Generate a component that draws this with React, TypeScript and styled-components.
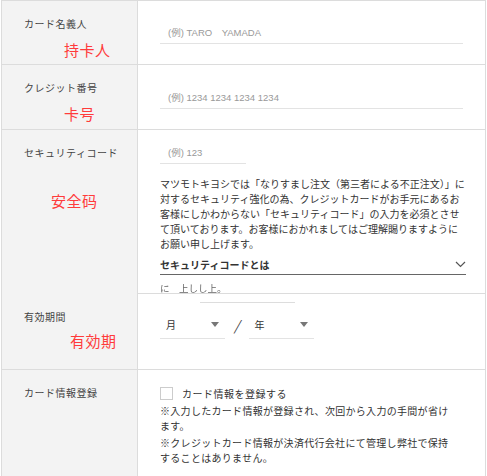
import React from "react";
import styled, { createGlobalStyle } from "styled-components";

const Global = createGlobalStyle`
  html, body { margin: 0; padding: 0; background: #fff; }
  body { font-family: "Noto Sans CJK JP", "Noto Sans", sans-serif; color: #333; }
`;

const Table = styled.div`
  width: 483px;
  border: 1.5px solid #dcdcdc;
  border-bottom: none;
  margin-left: 1px;
`;

const Row = styled.div<{ h: number }>`
  display: grid;
  grid-template-columns: 136px 1fr;
  height: ${(p) => p.h}px;
  border-bottom: 1.5px solid #dcdcdc;
`;

const Label = styled.div`
  background: #f3f3f3;
  border-right: 1.5px solid #dcdcdc;
  padding: 15px 0 0 22px;
  display: flex;
  flex-direction: column;
  font-size: 10px;
  color: #444;
  letter-spacing: 0.5px;
`;

const Red = styled.div<{ top: number; left: number }>`
  color: #ff3b3b;
  font-size: 15px;
  margin-top: ${(p) => p.top}px;
  margin-left: ${(p) => p.left}px;
`;

const Body = styled.div<{ pt: number }>`
  padding: ${(p) => p.pt}px 22px 0 22px;
  display: flex;
  flex-direction: column;
`;

const Input = styled.div<{ w?: number }>`
  width: ${(p) => (p.w ? p.w + "px" : "100%")};
  border-bottom: 1.5px solid #e3e3e3;
  color: #999;
  font-size: 9.5px;
  font-family: "Liberation Sans", "Noto Sans CJK JP", sans-serif;
  padding: 0 0 4px 8px;
  box-sizing: border-box;
`;

const Para = styled.p`
  margin: 12px 0 0;
  font-size: 10px;
  line-height: 15px;
  color: #333;
  letter-spacing: 0;
  width: 306px;
`;

const Toggle = styled.div`
  margin-top: 6px;
  display: flex;
  justify-content: space-between;
  align-items: center;
  border-bottom: 1.5px solid #666;
  font-size: 10px;
  font-weight: bold;
  padding-bottom: 2px;
`;

const Faded = styled.div`
  font-size: 9.5px;
  color: #666;
  margin-top: 6px;
  filter: blur(0.3px);
`;

const ShortLine = styled.div`
  width: 95px;
  margin: 8px 0 0 40px;
  border-bottom: 1.5px solid #ddd;
`;

const Selects = styled.div`
  display: flex;
  align-items: center;
  gap: 9px;
  margin-top: 12px;
`;

const Select = styled.div`
  width: 65px;
  border-bottom: 1.5px solid #e3e3e3;
  display: flex;
  justify-content: space-between;
  align-items: center;
  font-size: 10px;
  padding: 0 6px 6px 6px;
  box-sizing: border-box;
`;

const Arrow = styled.span`
  width: 0; height: 0;
  border-left: 4px solid transparent;
  border-right: 4px solid transparent;
  border-top: 5px solid #777;
`;

const Slash = styled.span`
  font-size: 14px;
  color: #444;
  margin-bottom: 6px;
  font-style: italic;
`;

const Check = styled.label`
  display: flex;
  align-items: center;
  gap: 9px;
  font-size: 10px;
  letter-spacing: 0.5px;
`;

const Box = styled.span`
  width: 11px; height: 11px;
  border: 1px solid #ccc;
  background: #fff;
`;

const Note = styled.p`
  margin: 2px 0 0;
  font-size: 10px;
  line-height: 15px;
  letter-spacing: 0.3px;
  width: 296px;
`;

export default function App() {
  return (
    <>
      <Global />
      <Table>
        <Row h={63}>
          <Label>カード名義人<Red top={8} left={40}>持卡人</Red></Label>
          <Body pt={24}><Input>(例) TARO　YAMADA</Input></Body>
        </Row>
        <Row h={64}>
          <Label>クレジット番号<Red top={8} left={40}>卡号</Red></Label>
          <Body pt={25}><Input>(例) 1234 1234 1234 1234</Input></Body>
        </Row>
        <Row h={163}>
          <Label>セキュリティコード<Red top={30} left={27}>安全码</Red></Label>
          <Body pt={15}>
            <Input w={86}>(例) 123</Input>
            <Para>
              マツモトキヨシでは「なりすまし注文（第三者による不正注文）」に対するセキュリティ強化の為、クレジットカードがお手元にあるお客様にしかわからない「セキュリティコード」の入力を必須とさせて頂いております。お客様におかれましてはご理解賜りますようにお願い申し上げます。
            </Para>
            <Toggle>
              セキュリティコードとは
              <svg width="11" height="7" viewBox="0 0 11 7"><path d="M1 1l4.5 4.5L10 1" fill="none" stroke="#555" strokeWidth="1.2" /></svg>
            </Toggle>
            <Faded>に　上しし上。</Faded>
          </Body>
        </Row>
        <Row h={75}>
          <Label>有効期間<Red top={6} left={46}>有効期</Red></Label>
          <Body pt={0}>
            <ShortLine />
            <Selects>
              <Select>月<Arrow /></Select>
              <Slash>/</Slash>
              <Select>年<Arrow /></Select>
            </Selects>
          </Body>
        </Row>
        <Row h={109}>
          <Label>カード情報登録</Label>
          <Body pt={16}>
            <Check><Box />カード情報を登録する</Check>
            <Note>※入力したカード情報が登録され、次回から入力の手間が省けます。</Note>
            <Note>※クレジットカード情報が決済代行会社にて管理し弊社で保持することはありません。</Note>
          </Body>
        </Row>
      </Table>
    </>
  );
}
